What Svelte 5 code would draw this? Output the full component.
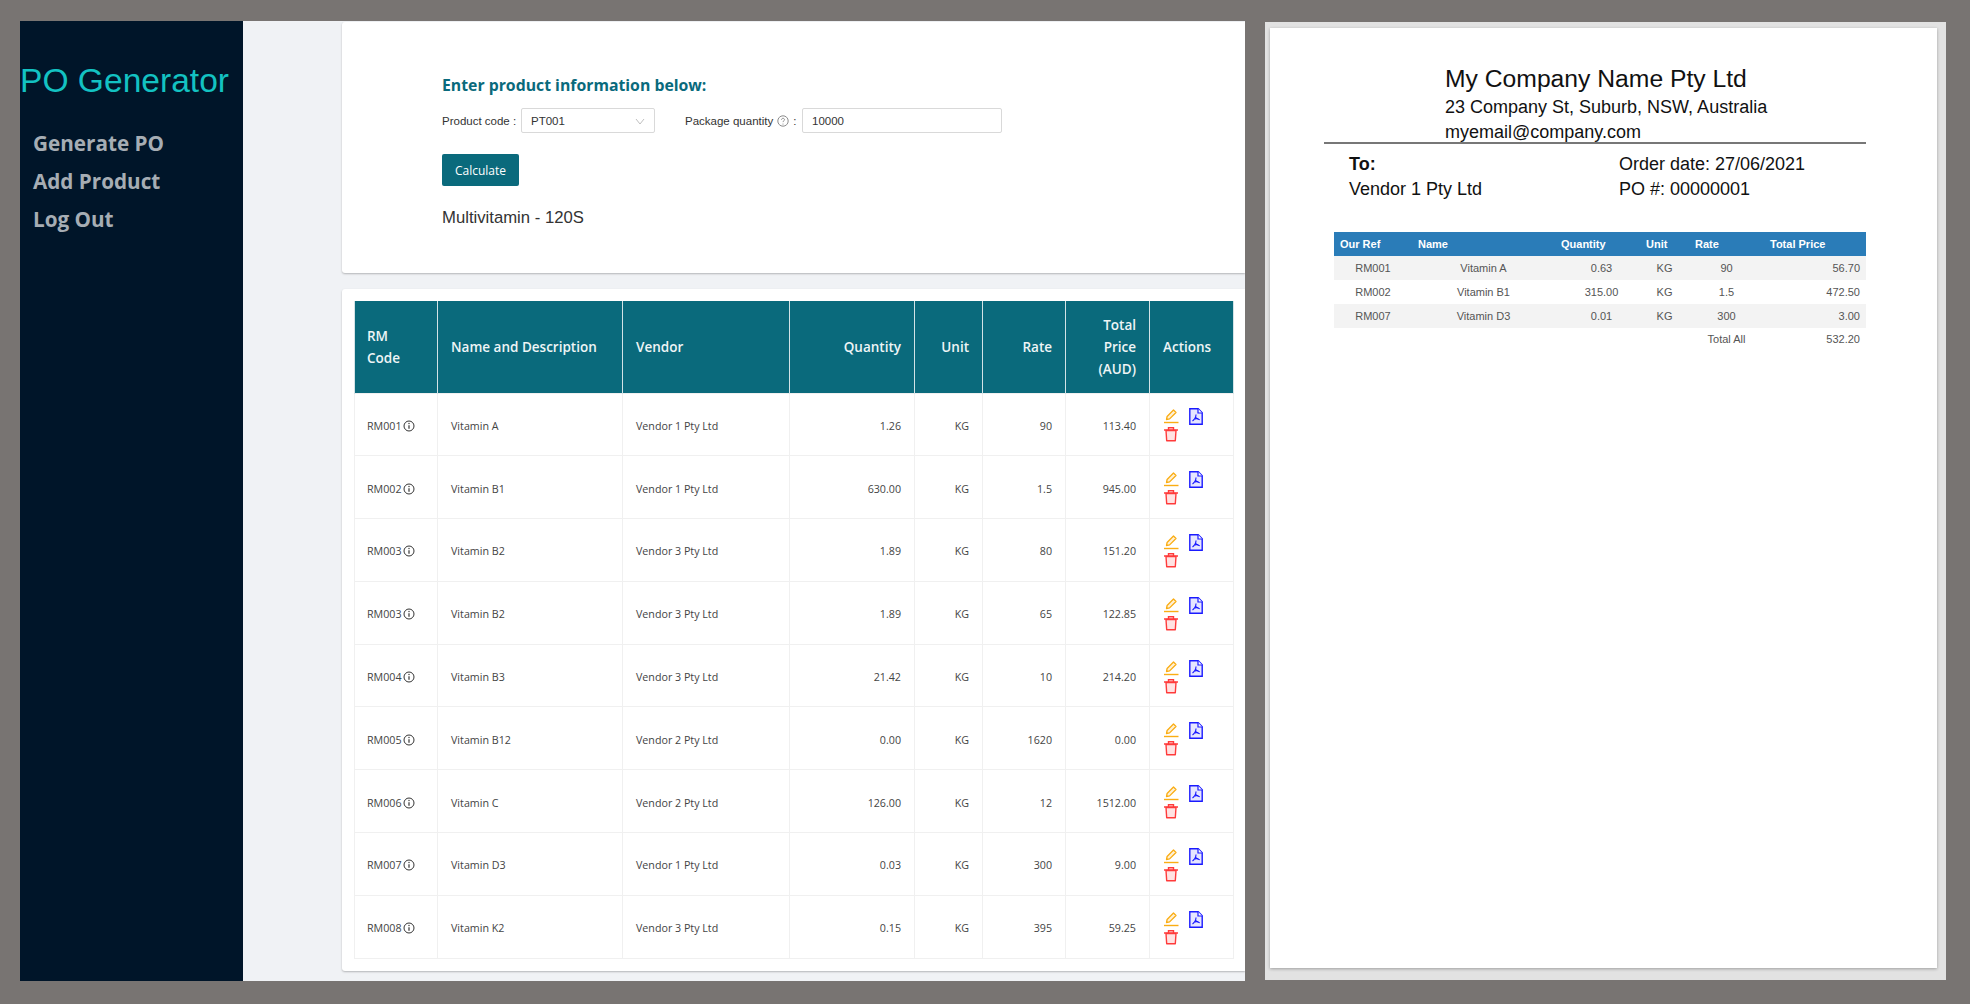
<script>
	const rows = [
		['RM001', 'Vitamin A', 'Vendor 1 Pty Ltd', '1.26', 'KG', '90', '113.40'],
		['RM002', 'Vitamin B1', 'Vendor 1 Pty Ltd', '630.00', 'KG', '1.5', '945.00'],
		['RM003', 'Vitamin B2', 'Vendor 3 Pty Ltd', '1.89', 'KG', '80', '151.20'],
		['RM003', 'Vitamin B2', 'Vendor 3 Pty Ltd', '1.89', 'KG', '65', '122.85'],
		['RM004', 'Vitamin B3', 'Vendor 3 Pty Ltd', '21.42', 'KG', '10', '214.20'],
		['RM005', 'Vitamin B12', 'Vendor 2 Pty Ltd', '0.00', 'KG', '1620', '0.00'],
		['RM006', 'Vitamin C', 'Vendor 2 Pty Ltd', '126.00', 'KG', '12', '1512.00'],
		['RM007', 'Vitamin D3', 'Vendor 1 Pty Ltd', '0.03', 'KG', '300', '9.00'],
		['RM008', 'Vitamin K2', 'Vendor 3 Pty Ltd', '0.15', 'KG', '395', '59.25']
	];

	const poRows = [
		['RM001', 'Vitamin A', '0.63', 'KG', '90', '56.70'],
		['RM002', 'Vitamin B1', '315.00', 'KG', '1.5', '472.50'],
		['RM007', 'Vitamin D3', '0.01', 'KG', '300', '3.00']
	];
</script>

<div class="screen">
	<div class="window">
		<aside class="sider">
			<div class="logo">PO Generator</div>
			<nav>
				<a href="#generate">Generate PO</a>
				<a href="#add">Add Product</a>
				<a href="#logout">Log Out</a>
			</nav>
		</aside>

		<main>
			<section class="card form-card">
				<h3>Enter product information below:</h3>
				<div class="form-row">
					<span class="label code-label">Product code :</span>
					<div class="select">
						<span>PT001</span>
						<svg width="10" height="10" viewBox="0 0 10 10"><path d="M1 3l4 5 4-5" fill="none" stroke="#bfbfbf" /></svg>
					</div>
					<span class="label qty-label">
						Package quantity
						<svg class="hint" width="12" height="12" viewBox="0 0 12 12">
							<circle cx="6" cy="6" r="5.2" fill="none" stroke="#8c8c8c" />
							<path d="M4.5 4.8c0-2 3-2 3 0 0 1-1.500 1-1.500 2.300" fill="none" stroke="#8c8c8c" />
							<circle cx="6" cy="9" r=".6" fill="#8c8c8c" />
						</svg>
						:
					</span>
					<div class="input">10000</div>
				</div>
				<button>Calculate</button>
				<p class="product">Multivitamin - 120S</p>
			</section>

			<section class="card table-card">
				<table>
					<colgroup>
						<col style="width: 83px" />
						<col style="width: 185px" />
						<col style="width: 167px" />
						<col style="width: 125px" />
						<col style="width: 68px" />
						<col style="width: 83px" />
						<col style="width: 84px" />
						<col style="width: 84px" />
					</colgroup>
					<thead>
						<tr>
							<th>RM<br />Code</th>
							<th>Name and Description</th>
							<th>Vendor</th>
							<th class="num">Quantity</th>
							<th class="num">Unit</th>
							<th class="num">Rate</th>
							<th class="num">Total<br />Price<br />(AUD)</th>
							<th>Actions</th>
						</tr>
					</thead>
					<tbody>
						{#each rows as row}
							<tr>
								<td class="code">
									{row[0]}<svg class="info" width="12" height="12" viewBox="0 0 12 12">
										<circle cx="6" cy="6" r="5" fill="none" stroke="#333" />
										<path d="M6 5.200v3.500" stroke="#333" stroke-width="1.200" />
										<circle cx="6" cy="3.500" r=".7" fill="#333" />
									</svg>
								</td>
								<td>{row[1]}</td>
								<td>{row[2]}</td>
								<td class="num">{row[3]}</td>
								<td class="num">{row[4]}</td>
								<td class="num">{row[5]}</td>
								<td class="num">{row[6]}</td>
								<td class="actions">
									<div class="action-icons">
										<div class="stack">
											<svg width="16" height="16" viewBox="0 0 16 16">
												<path d="M3.500 11.500l.6-3L10.500 2l2.500 2.500-6.400 6.400z" fill="#fff1d6" stroke="#faad14" stroke-width="1.300" stroke-linejoin="round" />
												<path d="M1 14.500h14.500" stroke="#faad14" stroke-width="1.400" />
											</svg>
											<svg width="16" height="16" viewBox="0 0 16 16">
												<path d="M3 4.500h10l-.7 10.300H3.700z" fill="#ffe3e3" stroke="#ff3b3b" stroke-width="1.400" stroke-linejoin="round" />
												<path d="M1 4h14M5.500 4V1.800h5V4" fill="none" stroke="#ff3b3b" stroke-width="1.400" />
											</svg>
										</div>
										<svg class="pdf" width="14" height="17" viewBox="0 0 14 17">
											<path d="M.8.800h8.400l4 4v11.400H.8z" fill="#e6e6ff" stroke="#1a1aff" stroke-width="1.400" />
											<path d="M9 .8v4.200h4.200" fill="#fff" stroke="#1a1aff" stroke-width="1.200" />
											<path d="M7 6.500c0 3-1.500 5-3.500 6.500M7 9.500c1 1.500 2 2 3.800 2.200M4.500 11.500c1.500-.6 3-1 5-1" fill="none" stroke="#1a1aff" stroke-width="1.100" />
										</svg>
									</div>
								</td>
							</tr>
						{/each}
					</tbody>
				</table>
			</section>
		</main>
	</div>

	<aside class="viewer">
		<div class="page">
			<header class="company">
				<h1>My Company Name Pty Ltd</h1>
				<p>23 Company St, Suburb, NSW, Australia</p>
				<p class="email">myemail@company.com</p>
			</header>
			<div class="parties">
				<div>
					<p><strong>To:</strong></p>
					<p>Vendor 1 Pty Ltd</p>
				</div>
				<div>
					<p>Order date: 27/06/2021</p>
					<p>PO #: 00000001</p>
				</div>
			</div>
			<table class="po">
				<colgroup>
					<col style="width: 78px" />
					<col style="width: 143px" />
					<col style="width: 85px" />
					<col style="width: 49px" />
					<col style="width: 75px" />
					<col style="width: 102px" />
				</colgroup>
				<thead>
					<tr>
						<th>Our Ref</th>
						<th>Name</th>
						<th>Quantity</th>
						<th>Unit</th>
						<th>Rate</th>
						<th>Total Price</th>
					</tr>
				</thead>
				<tbody>
					{#each poRows as row}
						<tr>
							<td>{row[0]}</td>
							<td>{row[1]}</td>
							<td class="po-qty">{row[2]}</td>
							<td>{row[3]}</td>
							<td>{row[4]}</td>
							<td class="po-total">{row[5]}</td>
						</tr>
					{/each}
					<tr class="total-row">
						<td colspan="4"></td>
						<td>Total All</td>
						<td class="po-total">532.20</td>
					</tr>
				</tbody>
			</table>
		</div>
	</aside>
</div>

<style>
	:global(body) {
		margin: 0;
		background: #787472;
	}

	.screen {
		display: flex;
		align-items: flex-start;
		height: 1004px;
		padding: 21px 0 0 20px;
		box-sizing: border-box;
		font-family: 'Open Sans', 'Liberation Sans', sans-serif;
	}

	.window {
		display: flex;
		width: 1225px;
		height: 960px;
		flex-shrink: 0;
		background: #f0f2f5;
		overflow: hidden;
	}

	.sider {
		width: 223px;
		flex-shrink: 0;
		background: #001529;
	}

	.logo {
		margin-top: 37px;
		font-family: 'Liberation Sans', Arial, sans-serif;
		font-size: 33.6px;
		line-height: 46px;
		color: #13c2c2;
		white-space: nowrap;
	}

	nav {
		display: flex;
		flex-direction: column;
		gap: 11px;
		margin-top: 26px;
		padding-left: 13px;
	}

	nav a {
		font-size: 20.7px;
		font-weight: 700;
		line-height: 27px;
		color: #a6adb4;
		text-decoration: none;
	}

	main {
		width: 903px;
		margin-left: 99px;
		flex-shrink: 0;
	}

	.card {
		background: #fff;
		border-radius: 3px 0 0 3px;
		box-shadow: 0 1px 2px rgba(0, 0, 0, 0.25);
	}

	.form-card {
		height: 251px;
		margin-top: 1px;
		padding: 52px 0 0 100px;
		box-sizing: border-box;
	}

	h3 {
		margin: 0;
		font-size: 15.8px;
		font-weight: 700;
		line-height: 22px;
		color: #0a6a7c;
	}

	.form-row {
		display: flex;
		align-items: center;
		margin-top: 12px;
		font-family: 'Liberation Sans', Arial, sans-serif;
		font-size: 11.5px;
		color: #333;
	}

	.label {
		display: flex;
		align-items: center;
		gap: 4px;
		white-space: nowrap;
	}

	.code-label {
		width: 79px;
	}

	.select,
	.input {
		display: flex;
		align-items: center;
		height: 25px;
		box-sizing: border-box;
		padding: 0 9px;
		border: 1px solid #d9d9d9;
		border-radius: 2px;
		color: #333;
	}

	.select {
		justify-content: space-between;
		width: 134px;
	}

	.qty-label {
		width: 117px;
		margin-left: 30px;
	}

	.input {
		width: 200px;
	}

	button {
		display: block;
		width: 77px;
		height: 32px;
		margin-top: 21px;
		padding: 0;
		border: none;
		border-radius: 2px;
		background: #0a6a7c;
		color: #fff;
		font-family: inherit;
		font-size: 12px;
	}

	.product {
		margin: 21px 0 0;
		font-family: 'Liberation Sans', Arial, sans-serif;
		font-size: 16.7px;
		line-height: 22px;
		color: #333;
	}

	.table-card {
		height: 682px;
		margin-top: 16px;
		padding: 12px 12px 0;
		box-sizing: border-box;
	}

	table {
		border-collapse: collapse;
		table-layout: fixed;
	}

	.table-card table {
		width: 879px;
	}

	.table-card th {
		height: 92px;
		padding: 0 13px;
		box-sizing: border-box;
		border: 1px solid #d3e3e6;
		border-width: 0 1px;
		background: #0a6a7c;
		color: #eef5f6;
		font-size: 13.5px;
		font-weight: 600;
		line-height: 22px;
		text-align: left;
	}

	.table-card td {
		height: 62.8px;
		padding: 3px 13px 0;
		box-sizing: border-box;
		border: 1px solid #f0f0f0;
		font-size: 10.7px;
		color: #444;
	}

	.table-card .num {
		text-align: right;
	}

	.table-card th:first-child,
	.table-card td.code {
		padding-left: 12px;
		padding-right: 0;
	}

	.info {
		vertical-align: -2px;
		margin-left: 1px;
	}

	.table-card td.actions {
		padding: 2px 0 0 13px;
	}

	.action-icons {
		display: flex;
		align-items: flex-start;
		gap: 10px;
	}

	.stack {
		display: flex;
		flex-direction: column;
		gap: 2px;
	}

	.stack svg,
	.pdf {
		display: block;
	}

	.viewer {
		width: 681px;
		height: 958px;
		margin: 1px 0 0 20px;
		padding: 6px 9px 12px 5px;
		box-sizing: border-box;
		flex-shrink: 0;
		background: #e2e2e2;
	}

	.page {
		height: 100%;
		padding: 34px 0 0 54px;
		box-sizing: border-box;
		background: #fff;
		box-shadow: 0 1px 3px rgba(0, 0, 0, 0.3);
		font-family: 'Liberation Sans', Arial, sans-serif;
		color: #111;
	}

	.page p {
		margin: 0;
	}

	.company {
		width: 542px;
		padding-left: 121px;
		box-sizing: border-box;
		border-bottom: 2px solid #777;
		font-size: 18px;
		line-height: 25px;
	}

	.company .email {
		height: 22px;
	}

	h1 {
		margin: 0;
		font-size: 24.7px;
		font-weight: 400;
		line-height: 33px;
	}

	.parties {
		display: grid;
		grid-template-columns: 270px auto;
		padding: 8px 0 0 25px;
		font-size: 18px;
		line-height: 25px;
	}

	.po {
		width: 532px;
		margin: 30px 0 0 10px;
		font-size: 11px;
		color: #555;
	}

	.po th {
		height: 24px;
		padding: 0 0 0 6px;
		background: #2a7cb8;
		color: #fff;
		font-size: 11px;
		font-weight: 700;
		text-align: left;
	}

	.po td {
		height: 24px;
		padding: 0;
		text-align: center;
	}

	.po tbody tr:nth-child(odd):not(.total-row) td {
		background: #f3f3f3;
	}

	.po .po-total {
		padding-right: 6px;
		text-align: right;
	}

	.po .po-qty {
		padding-left: 8px;
	}

	.total-row td {
		height: 22px;
	}
</style>
